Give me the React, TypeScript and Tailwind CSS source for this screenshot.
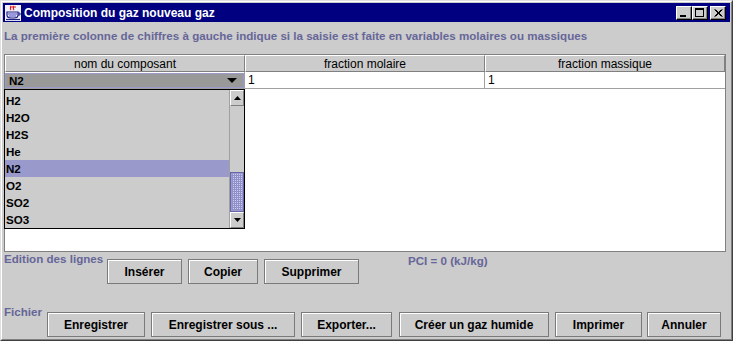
import React from "react";

const items = ["H2", "H2O", "H2S", "He", "N2", "O2", "SO2", "SO3"];

function Btn({ className, children }: { className: string; children: React.ReactNode }) {
  return (
    <div
      className={`h-[25px] shrink-0 flex items-center justify-center bg-[#cccccc] border border-[#7a7a7a] shadow-[inset_1px_1px_0_#ffffff] text-[12px] font-bold text-black ${className}`}
    >
      {children}
    </div>
  );
}

function WinBtn({ children, className = "" }: { children: React.ReactNode; className?: string }) {
  return (
    <div
      className={`w-[16px] h-[14px] relative bg-[#cccccc] border border-t-white border-l-white border-r-black border-b-black shadow-[inset_-1px_-1px_0_#808080] ${className}`}
    >
      {children}
    </div>
  );
}

function JavaIcon() {
  return (
    <svg width="16" height="16" viewBox="0 0 16 16" className="shrink-0">
      <rect x="0" y="0" width="16" height="16" fill="#f0f0fa" />
      <path d="M5 1 C7 2 4 3 6 5 M8 1 C10 2 7 3 9 5 M6 2 h5" stroke="#e02020" strokeWidth="1.2" fill="none" />
      <path d="M2 7 h11 v3 c0 2 -2 3 -4 3 h-3 c-2 0 -4 -1 -4 -3z" fill="none" stroke="#202080" strokeWidth="1.2" />
      <path d="M13 8 h2 v2 h-2" fill="none" stroke="#202080" strokeWidth="1" />
      <path d="M3 9 h9 M4 11 h7" stroke="#4040c0" strokeWidth="1" />
      <path d="M1 14.5 h14" stroke="#202080" strokeWidth="1.2" />
    </svg>
  );
}

export default function App() {
  return (
    <div className="w-[733px] h-[341px] overflow-hidden bg-[#cccccc] border border-t-[#dfdfdf] border-l-[#dfdfdf] border-r-[#404040] border-b-[#404040] font-['Liberation_Sans',Arial,sans-serif]">
      <div className="w-full h-full border border-t-white border-l-white border-r-[#808080] border-b-[#808080] p-px flex flex-col">
        {/* Title bar */}
        <div className="h-[19px] shrink-0 bg-[#000080] flex items-center pl-[2px] pr-[4px]">
          <JavaIcon />
          <span className="ml-[3px] text-white font-bold text-[12px] leading-none">Composition du gaz nouveau gaz</span>
          <div className="ml-auto flex items-center">
            <WinBtn>
              <div className="absolute left-[3px] top-[8px] w-[6px] h-[2px] bg-black" />
            </WinBtn>
            <WinBtn>
              <div className="absolute left-[2px] top-[1px] w-[9px] h-[9px] border border-black border-t-2" />
            </WinBtn>
            <WinBtn className="ml-[2px]">
              <svg width="14" height="12" viewBox="0 0 14 12" className="absolute left-0 top-0">
                <path d="M3.5 2.5 L10.5 9.5 M4.5 2.5 L11.5 9.5 M10.5 2.5 L3.5 9.5 M11.5 2.5 L4.5 9.5" stroke="black" strokeWidth="1" />
              </svg>
            </WinBtn>
          </div>
        </div>

        {/* Info label */}
        <div className="h-[32px] shrink-0 pt-[7px] pl-px text-[11.6px] font-bold leading-[14px] text-[#666699] whitespace-nowrap">
          La première colonne de chiffres à gauche indique si la saisie est faite en variables molaires ou massiques
        </div>

        {/* Table */}
        <div className="ml-px w-[722px] h-[198px] shrink-0 relative border border-[#808080] bg-white flex flex-col">
          <div className="flex h-[17px] shrink-0">
            {["nom du composant", "fraction molaire", "fraction massique"].map((h) => (
              <div
                key={h}
                className="w-[240px] h-full flex items-center justify-center bg-[#cccccc] border border-t-white border-l-white border-r-[#808080] border-b-[#808080] text-[12px] text-black"
              >
                {h}
              </div>
            ))}
          </div>
          <div className="flex h-[17px] shrink-0">
            <div className="w-[240px] h-full border-b border-r border-[#a0a0a0] pt-px">
              <div className="h-[15px] bg-[#999999] border border-[#9999cc] flex items-center pl-[3px] pr-[6px]">
                <span className="text-[11.6px] font-bold text-black leading-none">N2</span>
                <svg width="10" height="5" viewBox="0 0 10 5" className="ml-auto">
                  <path d="M0 0 H10 L5 5 Z" fill="black" />
                </svg>
              </div>
            </div>
            <div className="w-[240px] h-full border-b border-r border-[#a0a0a0] pl-[3px] flex items-center text-[12px] text-black">1</div>
            <div className="w-[240px] h-full border-b border-[#a0a0a0] pl-[3px] flex items-center text-[12px] text-black">1</div>
          </div>

          {/* Dropdown popup */}
          <div className="absolute left-[-1px] top-[34px] w-[241px] h-[140px] border border-black bg-[#cccccc] flex">
            <div className="flex-1 pt-[2px]">
              {items.map((it) => (
                <div
                  key={it}
                  className={`h-[17px] pl-px flex items-center text-[11.6px] font-bold text-black ${it === "N2" ? "bg-[#9999cc]" : ""}`}
                >
                  {it}
                </div>
              ))}
            </div>
            <div className="w-[15px] h-full flex flex-col border-l border-[#a0a0a0]">
              <div className="h-[16px] shrink-0 flex items-center justify-center bg-[#cccccc] border border-t-white border-l-white border-r-[#808080] border-b-[#808080]">
                <svg width="7" height="4" viewBox="0 0 7 4">
                  <path d="M0 4 H7 L3.5 0 Z" fill="black" />
                </svg>
              </div>
              <div className="h-[66px] shrink-0 bg-[#cccccc]" />
              <div className="h-[40px] shrink-0 border border-[#6666aa] bg-[#9999cc] p-px">
                <div className="w-full h-full [background-image:conic-gradient(#ccccff_0_25%,#9090c4_0)] [background-size:2px_2px]" />
              </div>
              <div className="flex-1 flex items-center justify-center bg-[#cccccc] border border-t-white border-l-white border-r-[#808080] border-b-[#808080]">
                <svg width="7" height="4" viewBox="0 0 7 4">
                  <path d="M0 0 H7 L3.5 4 Z" fill="black" />
                </svg>
              </div>
            </div>
          </div>
        </div>

        {/* Edition des lignes */}
        <div className="h-[52px] shrink-0 flex items-start">
          <div className="w-[104px] shrink-0 pl-px text-[11.6px] font-bold leading-[14px] text-[#666699] whitespace-nowrap">
            Edition des lignes
          </div>
          <div className="mt-[7px] flex gap-[6px]">
            <Btn className="w-[75px]">Insérer</Btn>
            <Btn className="w-[70px]">Copier</Btn>
            <Btn className="w-[95px]">Supprimer</Btn>
          </div>
          <div className="ml-[49px] mt-[2px] text-[11.6px] font-bold leading-[14px] text-[#666699] whitespace-nowrap">
            PCI = 0 (kJ/kg)
          </div>
        </div>

        {/* Fichier */}
        <div className="flex items-start">
          <div className="w-[44px] shrink-0 pl-px pt-px text-[11.6px] font-bold leading-[14px] text-[#666699]">Fichier</div>
          <div className="mt-[8px] flex">
            <Btn className="w-[98px]">Enregistrer</Btn>
            <Btn className="w-[144px] ml-[6px]">Enregistrer sous ...</Btn>
            <Btn className="w-[91px] ml-[6px]">Exporter...</Btn>
            <Btn className="w-[150px] ml-[7px]">Créer un gaz humide</Btn>
            <Btn className="w-[87px] ml-[6px]">Imprimer</Btn>
            <Btn className="w-[74px] ml-[5px]">Annuler</Btn>
          </div>
        </div>
      </div>
    </div>
  );
}
